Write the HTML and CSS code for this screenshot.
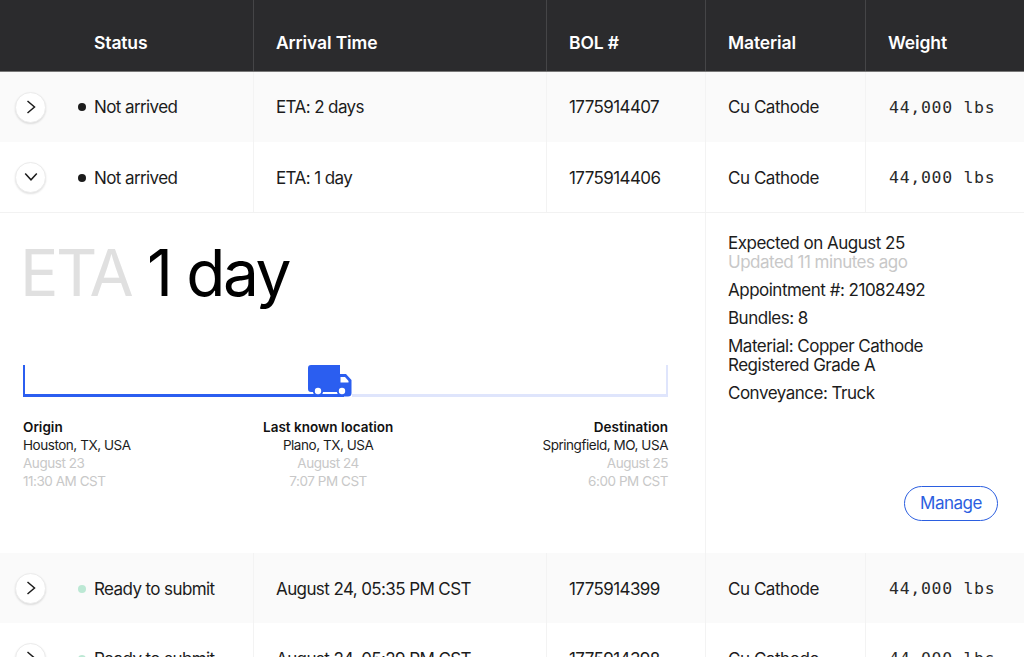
FILE: index.html
```html
<!DOCTYPE html>
<html lang="en">
<head>
<meta charset="utf-8">
<title>Shipments</title>
<link rel="stylesheet" href="styles.css">
</head>
<body>
<div class="table">
  <div class="row head">
    <div class="cell status-cell"><span class="status-head">Status</span></div>
    <div class="cell">Arrival Time</div>
    <div class="cell">BOL #</div>
    <div class="cell">Material</div>
    <div class="cell last">Weight</div>
  </div>
  <div class="row shade">
    <div class="cell status-cell">
      <button class="toggle"><svg width="12" height="14" viewBox="0 0 12 14"><path d="M2.500 1 9.500 7l-7 6"/></svg></button>
      <span class="dot"></span>Not arrived
    </div>
    <div class="cell">ETA: 2 days</div>
    <div class="cell">1775914407</div>
    <div class="cell material">Cu Cathode</div>
    <div class="cell last mono">44,000 lbs</div>
  </div>
  <div class="row open">
    <div class="cell status-cell">
      <button class="toggle"><svg width="14" height="12" viewBox="0 0 14 12"><path d="M1.200 2.500 7 8.800l5.800-6.300"/></svg></button>
      <span class="dot"></span>Not arrived
    </div>
    <div class="cell">ETA: 1 day</div>
    <div class="cell">1775914406</div>
    <div class="cell material">Cu Cathode</div>
    <div class="cell last mono">44,000 lbs</div>
  </div>
  <div class="detail">
    <div class="journey">
      <h2 class="headline"><span class="faint">ETA</span> 1 day</h2>
      <div class="track">
        <div class="done"></div>
        <svg class="truck" width="44" height="32" viewBox="0 0 44 32">
          <path d="M3 0h29v9h6l5.500 6v13a3.500 3.500 0 0 1-3.500 3.500H34V27H3a3 3 0 0 1-3-3V3a3 3 0 0 1 3-3z" fill="#2b5ef0"/>
          <rect y="29" width="36" height="3" fill="#2b5ef0"/>
          <path d="M32.500 12h4.500l3.500 4v1.500h-8z" fill="#fff"/>
          <circle cx="10" cy="26" r="5.200" fill="#2b5ef0"/>
          <circle cx="34" cy="26" r="5.200" fill="#2b5ef0"/>
          <circle cx="10" cy="26" r="3.200" fill="#fff"/>
          <circle cx="34" cy="26" r="3.200" fill="#fff"/>
        </svg>
        <div class="rest"></div>
      </div>
      <div class="stops">
        <div class="stop">
          <strong>Origin</strong>
          <span>Houston, TX, USA</span>
          <span class="muted">August 23</span>
          <span class="muted">11:30 AM CST</span>
        </div>
        <div class="stop mid">
          <strong>Last known location</strong>
          <span>Plano, TX, USA</span>
          <span class="muted">August 24</span>
          <span class="muted">7:07 PM CST</span>
        </div>
        <div class="stop end">
          <strong>Destination</strong>
          <span>Springfield, MO, USA</span>
          <span class="muted">August 25</span>
          <span class="muted">6:00 PM CST</span>
        </div>
      </div>
    </div>
    <div class="facts">
      <p>Expected on August 25<br><span class="muted">Updated 11 minutes ago</span></p>
      <p>Appointment #: 21082492</p>
      <p>Bundles: 8</p>
      <p>Material: Copper Cathode<br>Registered Grade A</p>
      <p>Conveyance: Truck</p>
      <button class="manage">Manage</button>
    </div>
  </div>
  <div class="row shade low">
    <div class="cell status-cell">
      <button class="toggle"><svg width="12" height="14" viewBox="0 0 12 14"><path d="M2.500 1 9.500 7l-7 6"/></svg></button>
      <span class="dot ready"></span>Ready to submit
    </div>
    <div class="cell">August 24, 05:35 PM CST</div>
    <div class="cell">1775914399</div>
    <div class="cell material">Cu Cathode</div>
    <div class="cell last mono">44,000 lbs</div>
  </div>
  <div class="row low">
    <div class="cell status-cell">
      <button class="toggle"><svg width="12" height="14" viewBox="0 0 12 14"><path d="M2.500 1 9.500 7l-7 6"/></svg></button>
      <span class="dot ready"></span>Ready to submit
    </div>
    <div class="cell">August 24, 05:29 PM CST</div>
    <div class="cell">1775914398</div>
    <div class="cell material">Cu Cathode</div>
    <div class="cell last mono">44,000 lbs</div>
  </div>
</div>
</body>
</html>
```
FILE: styles.css
```css
* { box-sizing: border-box; }
html, body { margin: 0; height: 100%; overflow: hidden; background: #fff; }
body {
  font-family: Inter, "Liberation Sans", sans-serif;
  font-size: 17px;
  letter-spacing: -0.6px;
  color: #1c1c1c;
}
.row {
  display: grid;
  grid-template-columns: 254px 293px 159px 160px 158px;
  height: 70px;
}
.cell {
  display: flex;
  align-items: center;
  padding-left: 22px;
  padding-top: 1px;
  border-right: 1px solid #f3f3f3;
  white-space: nowrap;
}
.cell.last { border-right: 0; }
.open .cell, .low .cell { padding-top: 2px; }
.open .toggle, .low .toggle { margin-top: -1px; }
.material { letter-spacing: -0.45px; }
.head {
  height: 71.500px;
  background: #2b2b2d;
  color: #fff;
  font-size: 17.500px;
  font-weight: 600;
  letter-spacing: -0.130px;
  border-bottom: 1px solid #777;
}
.head .cell { padding-top: 15px; border-right-color: #454547; }
.status-head { padding-left: 79px; }
.shade { background: #fafafa; }
.open { height: 71px; border-bottom: 1px solid #f2f2f2; }
.status-cell { padding-left: 15px; }
.toggle {
  display: flex;
  align-items: center;
  justify-content: center;
  width: 31px;
  height: 31px;
  padding: 0;
  border: 1px solid #ececec;
  border-radius: 50%;
  background: #fff;
  box-shadow: 0 1px 2px rgba(0, 0, 0, 0.12);
}
.toggle svg { fill: none; stroke: #1c1c1c; stroke-width: 1.500; }
.dot {
  width: 8px;
  height: 8px;
  margin: 0 8px 0 32px;
  border-radius: 50%;
  background: #1c1c1c;
}
.dot.ready { background: #bce8d4; }
.mono {
  padding-left: 23px;
  font-family: "DejaVu Sans Mono", "Liberation Mono", monospace;
  font-size: 16.500px;
  letter-spacing: 0.700px;
  color: #2a2a2a;
}
.detail {
  display: grid;
  grid-template-columns: 706px 318px;
  height: 340px;
}
.journey {
  padding: 21px 37px 0 23px;
  border-right: 1px solid #f3f3f3;
}
.headline {
  margin: 0 0 0 -3px;
  font-size: 64px;
  font-weight: 400;
  line-height: 78px;
  letter-spacing: -2.400px;
  color: #000;
}
.faint { color: #e0e0e0; }
.track {
  display: flex;
  align-items: flex-end;
  height: 32px;
  margin-top: 53px;
}
.done {
  width: 285px;
  height: 100%;
  border-left: 2px solid #2b5ef0;
  border-bottom: 3px solid #2b5ef0;
}
.truck { flex: none; }
.rest {
  flex: 1;
  height: 100%;
  border-right: 2px solid #dfe5fc;
  border-bottom: 3px solid #dfe5fc;
}
.stops {
  display: grid;
  grid-template-columns: 240px auto 1fr;
  margin-top: 21px;
  font-size: 13.500px;
  line-height: 18px;
  letter-spacing: -0.460px;
}
.stop { display: flex; flex-direction: column; }
.stop strong { font-weight: 600; letter-spacing: 0; color: #111; }
.mid { text-align: center; }
.end { text-align: right; }
.muted { color: #c8c8c8; }
.facts {
  display: flex;
  flex-direction: column;
  align-items: flex-start;
  padding: 21px 26px 32px 22px;
  line-height: 19px;
  letter-spacing: -0.500px;
}
.facts p { margin: 0 0 9px; }
.manage {
  align-self: flex-end;
  width: 94px;
  height: 35px;
  margin-top: auto;
  padding: 0;
  border: 1.500px solid #2b5ee0;
  border-radius: 18px;
  background: #fff;
  color: #2b5ee0;
  font: inherit;
  letter-spacing: inherit;
}
```
